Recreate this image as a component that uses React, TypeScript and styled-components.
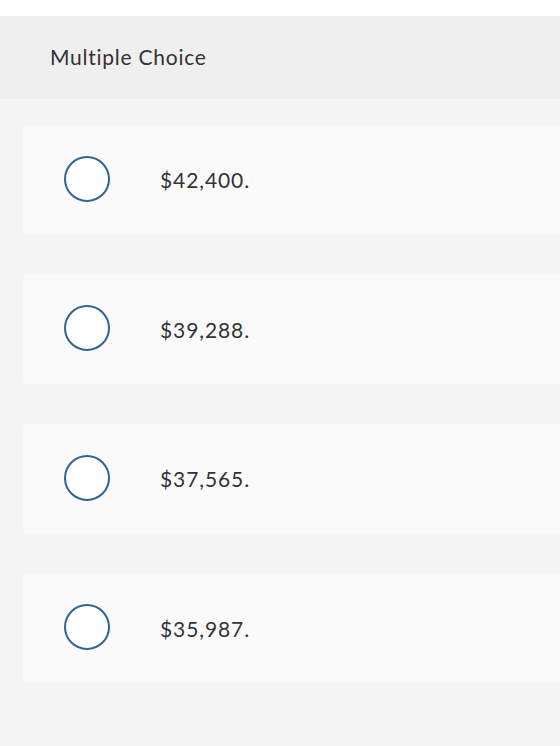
import React from 'react'
import styled, { createGlobalStyle } from 'styled-components'

const GlobalStyle = createGlobalStyle`
  html, body {
    margin: 0;
    padding: 0;
    background: #ffffff;
    overflow: hidden;
  }
  body {
    font-family: Lato, "Open Sans", sans-serif;
    font-variant-ligatures: none;
  }
`

const Page = styled.div`
  padding-top: 16px;
  width: 560px;
  height: 746px;
  box-sizing: border-box;
  overflow: hidden;
`

const Header = styled.div`
  background: #efefef;
  height: 83px;
  display: flex;
  align-items: center;
  padding-left: 50px;
  padding-bottom: 2px;
  box-sizing: border-box;
  font-size: 21px;
  letter-spacing: 0.75px;
  color: #333333;
`

const Body = styled.div`
  background: #f5f5f5;
  padding: 26px 0 64px 23px;
  display: flex;
  flex-direction: column;
  gap: 40.5px;
  height: 100%;
`

const Card = styled.label`
  background: #fafafa;
  border-radius: 4px;
  height: 109px;
  margin-right: -40px;
  display: flex;
  align-items: center;
  padding-left: 41px;
  cursor: pointer;
`

const Radio = styled.span`
  width: 42px;
  height: 42px;
  border: 2px solid #2f6496;
  border-radius: 50%;
  background: #ffffff;
  flex-shrink: 0;
  margin-top: -2px;
`

const Answer = styled.span`
  margin-left: 50px;
  font-size: 21px;
  letter-spacing: 0.9px;
  color: #333333;
`

const options = ['$42,400.', '$39,288.', '$37,565.', '$35,987.']

export default function App() {
  return (
    <>
      <GlobalStyle />
      <Page>
        <Header>Multiple Choice</Header>
        <Body>
          {options.map((o) => (
            <Card key={o}>
              <Radio />
              <Answer>{o}</Answer>
            </Card>
          ))}
        </Body>
      </Page>
    </>
  )
}
